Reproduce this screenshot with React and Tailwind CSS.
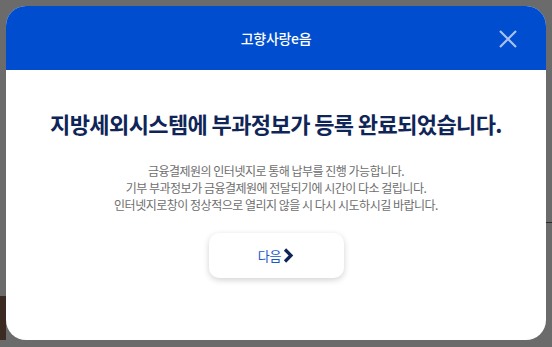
export default function App() {
  return (
    <div
      className="w-[552px] h-[347px] bg-[#6b6b6b] relative overflow-hidden"
      style={{ fontFamily: '"Noto Sans CJK KR", "Noto Sans", sans-serif' }}
    >
      {/* bits of the page behind the overlay */}
      <div className="absolute left-0 top-[296px] w-[6px] h-[44px] bg-[#3a2a22]" />
      <div className="absolute right-0 top-[222px] w-[6px] h-[1px] bg-[#2a2a2a]" />

      <div className="relative ml-[6px] mt-[6px] w-[540px] h-[334px] bg-white rounded-[20px] overflow-hidden flex flex-col">
        <div className="h-[64px] bg-[#004ecf] grid grid-cols-[1fr_auto_1fr] items-center">
          <div />
          <div className="text-white text-[14px] font-medium tracking-[-0.3px]">고향사랑e음</div>
          <div className="flex justify-end pr-[29px]">
            <button className="text-[#a9c1ee] pt-[1px]">
              <svg width="18" height="18" viewBox="0 0 18 18">
                <path d="M1 1 L17 17 M17 1 L1 17" stroke="currentColor" strokeWidth="2.2" fill="none" />
              </svg>
            </button>
          </div>
        </div>

        <div className="flex flex-col items-center pt-[39px]">
          <h1 className="text-[22px] leading-[28px] font-bold text-[#0f2557] tracking-[-0.6px]">
            지방세외시스템에 부과정보가 등록 완료되었습니다.
          </h1>
          <div className="mt-[25px] text-[12px] leading-[17px] text-[#6e6e6e] text-center tracking-[-0.5px]">
            <p>금융결제원의 인터넷지로 통해 납부를 진행 가능합니다.</p>
            <p>기부 부과정보가 금융결제원에 전달되기에 시간이 다소 걸립니다.</p>
            <p>인터넷지로창이 정상적으로 열리지 않을 시 다시 시도하시길 바랍니다.</p>
          </div>
          <button className="mt-[20px] w-[135px] h-[45px] bg-white rounded-[10px] shadow-[0_2px_6px_rgba(0,0,0,0.18)] flex items-center justify-center gap-[2px]">
            <span className="text-[13px] text-[#1b55c9] tracking-[-0.3px]">다음</span>
            <svg width="11" height="15" viewBox="0 0 11 15">
              <path d="M2 1.5 L8 7.5 L2 13.5" fill="none" stroke="#0f2557" strokeWidth="3.2" strokeLinejoin="miter" />
            </svg>
          </button>
        </div>
      </div>
    </div>
  );
}
